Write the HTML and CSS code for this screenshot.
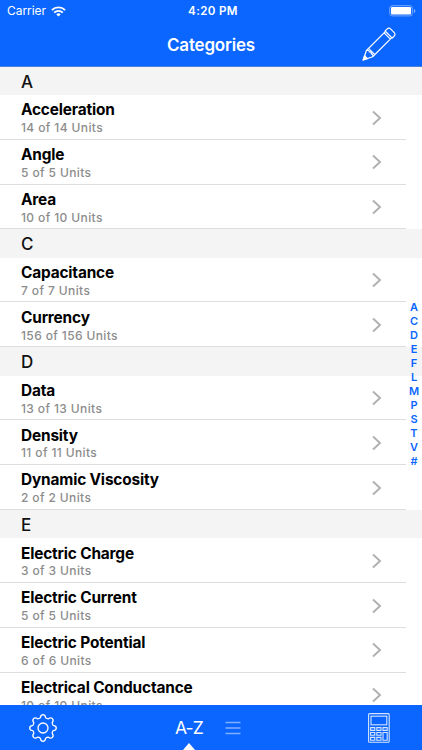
FILE: index.html
```html
<!DOCTYPE html>
<html lang="en">
<head>
<meta charset="utf-8">
<title>Categories</title>
<link rel="stylesheet" href="styles.css">
</head>
<body>
<div class="app">
  <header class="top">
    <div class="status">
      <div class="carrier">Carrier
        <svg width="15" height="11" viewBox="0 0 15 11" fill="none" stroke="#fff" stroke-width="1.9"><path d="M.9 4.1a9.4 9.4 0 0 1 13.2 0M3.2 6.6a6.1 6.1 0 0 1 8.6 0"/><path d="M7.5 10.5 5.3 8.4a3.2 3.2 0 0 1 4.4 0z" fill="#fff" stroke="none"/></svg>
      </div>
      <div class="time">4:20 PM</div>
      <svg class="battery" width="28" height="12" viewBox="0 0 28 12"><rect x=".7" y=".7" width="22.6" height="10.2" rx="2.4" fill="none" stroke="#75a8ff"/><rect x="2" y="2.1" width="20" height="7.4" rx="1" fill="#fff"/><path d="M24.8 4v4q1.7-.5 1.7-2t-1.7-2z" fill="#75a8ff"/></svg>
    </div>
    <div class="nav">
      <h1>Categories</h1>
      <svg class="pencil" width="36" height="36" viewBox="0 0 36 36" fill="none" stroke="#fff" stroke-width="1.2" stroke-linejoin="round"><g transform="translate(2.2 33) rotate(-45)"><path d="M0 0 9-4.4H36V4.4H9zM9-4.4Q11.5-3 10-1.4 12 0 10 1.4 11.5 3 9 4.4M12-4.4V4.4M34-4.4V4.4M36-5h2.6q2.7 0 2.7 2.7v4.6q0 2.7-2.7 2.7H36z"/><path d="M0 0 4-2V2z" fill="#fff"/></g></svg>
    </div>
  </header>
  <main class="list">
    <section>
      <h2>A</h2>
      <div class="row"><div><b>Acceleration</b><span>14 of 14 Units</span></div><svg class="chev" viewBox="0 0 10 16"><path d="M1 1.5 8 8 1 14.5"/></svg></div>
      <div class="row"><div><b>Angle</b><span>5 of 5 Units</span></div><svg class="chev" viewBox="0 0 10 16"><path d="M1 1.5 8 8 1 14.5"/></svg></div>
      <div class="row"><div><b>Area</b><span>10 of 10 Units</span></div><svg class="chev" viewBox="0 0 10 16"><path d="M1 1.5 8 8 1 14.5"/></svg></div>
    </section>
    <section>
      <h2>C</h2>
      <div class="row"><div><b>Capacitance</b><span>7 of 7 Units</span></div><svg class="chev" viewBox="0 0 10 16"><path d="M1 1.5 8 8 1 14.5"/></svg></div>
      <div class="row"><div><b>Currency</b><span>156 of 156 Units</span></div><svg class="chev" viewBox="0 0 10 16"><path d="M1 1.5 8 8 1 14.5"/></svg></div>
    </section>
    <section>
      <h2>D</h2>
      <div class="row"><div><b>Data</b><span>13 of 13 Units</span></div><svg class="chev" viewBox="0 0 10 16"><path d="M1 1.5 8 8 1 14.5"/></svg></div>
      <div class="row"><div><b>Density</b><span>11 of 11 Units</span></div><svg class="chev" viewBox="0 0 10 16"><path d="M1 1.5 8 8 1 14.5"/></svg></div>
      <div class="row"><div><b>Dynamic Viscosity</b><span>2 of 2 Units</span></div><svg class="chev" viewBox="0 0 10 16"><path d="M1 1.5 8 8 1 14.5"/></svg></div>
    </section>
    <section>
      <h2>E</h2>
      <div class="row"><div><b>Electric Charge</b><span>3 of 3 Units</span></div><svg class="chev" viewBox="0 0 10 16"><path d="M1 1.5 8 8 1 14.5"/></svg></div>
      <div class="row"><div><b>Electric Current</b><span>5 of 5 Units</span></div><svg class="chev" viewBox="0 0 10 16"><path d="M1 1.5 8 8 1 14.5"/></svg></div>
      <div class="row"><div><b>Electric Potential</b><span>6 of 6 Units</span></div><svg class="chev" viewBox="0 0 10 16"><path d="M1 1.5 8 8 1 14.5"/></svg></div>
      <div class="row"><div><b>Electrical Conductance</b><span>10 of 10 Units</span></div><svg class="chev" viewBox="0 0 10 16"><path d="M1 1.5 8 8 1 14.5"/></svg></div>
    </section>
  </main>
  <nav class="index"><a>A</a><a>C</a><a>D</a><a>E</a><a>F</a><a>L</a><a>M</a><a>P</a><a>S</a><a>T</a><a>V</a><a>#</a></nav>
  <footer class="bar">
    <svg class="gear" width="30" height="30" viewBox="-15 -15 30 30" fill="none" stroke="#fff" stroke-width="1.3" stroke-linejoin="round"><circle r="5"/><path d="M-2.7-10.2 Q-2.3-13.3 0-13.3 Q2.3-13.3 2.7-10.2 Q4-9.1 5.4-9.2 Q7.8-11 9.4-9.4 Q11-7.8 9.2-5.4 Q9.1-4 10.2-2.7 Q13.3-2.3 13.3 0 Q13.3 2.3 10.2 2.7 Q9.1 4 9.2 5.4 Q11 7.8 9.4 9.4 Q7.8 11 5.4 9.2 Q4 9.1 2.7 10.2 Q2.3 13.3 0 13.3 Q-2.3 13.3-2.7 10.2 Q-4 9.1-5.4 9.2 Q-7.8 11-9.4 9.4 Q-11 7.8-9.2 5.4 Q-9.1 4-10.2 2.7 Q-13.3 2.3-13.3 0 Q-13.3-2.3-10.2-2.7 Q-9.1-4-9.2-5.4 Q-11-7.8-9.4-9.4 Q-7.8-11-5.4-9.2 Q-4-9.1-2.7-10.2Z"/></svg>
    <div class="tabs">
      <div class="az">A-Z</div>
      <svg width="16" height="14" viewBox="0 0 16 14" stroke="#80b0ff" stroke-width="1.5"><path d="M.5 1.5h15M.5 7h15M.5 12.5h15"/></svg>
    </div>
    <svg class="calc" width="22" height="30" viewBox="0 0 22 30" fill="none" stroke="#d5e5ff" stroke-width="1.1"><rect x=".6" y=".6" width="20.6" height="28.6" rx="1"/><rect x="3" y="3.2" width="15.8" height="8.6"/><path d="M2.6 14.6h4.2v2.8H2.6zM8.8 14.6H13v2.8H8.8zM15 14.6h4.2v2.8H15zM2.6 19.5h4.2v2.8H2.6zM8.8 19.5H13v2.8H8.8zM2.6 24.4h4.2v2.8H2.6zM8.8 24.4H13v2.8H8.8zM15 19.5h4.2v7.7H15z"/></svg>
  </footer>
</div>
</body>
</html>
```
FILE: styles.css
```css
* { box-sizing: border-box; }
body { margin: 0; font-family: Inter, "Liberation Sans", sans-serif; background: #fff; }
.app { position: relative; width: 422px; height: 750px; overflow: hidden; display: flex; flex-direction: column; }
.top { flex: none; height: 66.7px; background: #0a66ff; color: #fff; border-bottom: 1px solid #4a82dd; }
.status { height: 22px; display: grid; grid-template-columns: 1fr auto 1fr; align-items: center; padding: 0 5px 0 7px; font-size: 12px; line-height: 22px; }
.carrier { display: flex; align-items: center; gap: 5px; letter-spacing: -.05px; }
.time { font-weight: 600; font-size: 11.6px; letter-spacing: .35px; padding-left: 2px; }
.battery { justify-self: end; }
.nav { height: 44px; display: grid; grid-template-columns: 1fr auto 1fr; align-items: center; }
.nav h1 { grid-column: 2; margin: 0; padding-top: 1px; font-size: 17px; font-weight: 600; line-height: 44px; letter-spacing: -.2px; }
.pencil { justify-self: end; margin-right: 25px; }
.list { flex: 1; min-height: 0; overflow: hidden; }
h2 { margin: 0; height: 28.3px; padding-left: 21px; background: #f4f4f4; color: #111; font-size: 17px; line-height: 30px; font-weight: 500; }
.row { width: 406px; height: 44.8px; padding: 5.3px 24.5px 0 21px; display: flex; justify-content: space-between; border-bottom: 1px solid #dedede; }
.row b, .row span { display: block; white-space: nowrap; }
.row b { font-size: 15.4px; line-height: 19px; font-weight: 700; letter-spacing: -.16px; color: #000; }
.row span { margin-top: .8px; font-size: 12px; line-height: 16px; font-weight: 500; color: #8c8c8c; letter-spacing: .38px; }
.chev { width: 10px; height: 16px; margin-top: 9.3px; fill: none; stroke: #b0b0b0; stroke-width: 1.9; }
.index { position: absolute; right: 0; top: 300px; width: 16px; display: flex; flex-direction: column; align-items: center; font-size: 11px; line-height: 14px; font-weight: 600; color: #0a66ff; }
.bar { flex: none; height: 45px; background: #0a66ff; display: flex; align-items: center; padding: 0 32px 0 28px; color: #fff; }
.tabs { display: flex; align-items: center; gap: 22px; height: 45px; margin-left: 117px; }
.calc { margin-left: auto; }
.az { position: relative; height: 45px; font-size: 17.5px; letter-spacing: -.9px; line-height: 45px; width: 28px; }
.az::after { content: ""; position: absolute; left: 50%; bottom: 0; margin-left: -6px; border: solid transparent; border-width: 0 6px 7px; border-bottom-color: #fff; }
```
